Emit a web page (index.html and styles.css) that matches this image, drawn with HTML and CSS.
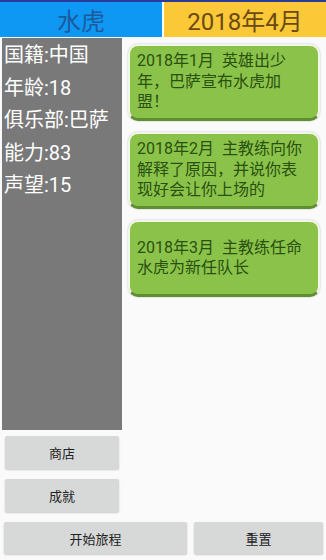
FILE: index.html
```html
<!DOCTYPE html>
<html lang="zh">
<head>
    <meta charset="UTF-8">
    <title>水虎</title>
    <link rel="stylesheet" href="styles.css">
</head>
<body>
    <div class="topbar">
        <div class="name">水虎</div>
        <div class="date">2018年4月</div>
    </div>
    <div class="main">
        <div class="side">
            <div class="stats">
                <p>国籍:中国</p>
                <p>年龄:18</p>
                <p>俱乐部:巴萨</p>
                <p>能力:83</p>
                <p>声望:15</p>
            </div>
            <button class="btn small">商店</button>
            <button class="btn small">成就</button>
        </div>
        <div class="news">
            <div class="card">2018年1月&nbsp;&nbsp;英雄出少年，巴萨宣布水虎加盟！</div>
            <div class="card">2018年2月&nbsp;&nbsp;主教练向你解释了原因，并说你表现好会让你上场的</div>
            <div class="card">2018年3月&nbsp;&nbsp;主教练任命水虎为新任队长</div>
        </div>
    </div>
    <div class="bottom">
        <button class="btn start">开始旅程</button>
        <button class="btn reset">重置</button>
    </div>
</body>
</html>
```

FILE: styles.css
```css
body {
    margin: 0;
    width: 326px;
    height: 560px;
    background: #fafafa;
    font-family: Roboto, "Noto Sans CJK SC", sans-serif;
    overflow: hidden;
}
.topbar {
    display: flex;
    height: 35px;
    border-top: 2px solid #2a3a9a;
    gap: 2px;
    background: #fff;
}
.name, .date {
    display: flex;
    align-items: center;
    justify-content: center;
    font-size: 24px;
}
.name {
    width: 162px;
    background: #0e98f4;
    color: #1d5a9c;
}
.date {
    flex: 1;
    background: #fbc838;
    color: #6a4a12;
}
.main {
    display: flex;
    padding: 1px 0 0 2px;
}
.side {
    width: 120px;
    display: flex;
    flex-direction: column;
}
.stats {
    height: 392px;
    background: #797979;
    color: #fff;
    font-size: 20px;
    padding: 0 0 0 2px;
}
.stats p {
    margin: 0;
    line-height: 32.5px;
}
.stats p:first-child {
    margin-top: 1px;
}
.btn {
    border: none;
    border-radius: 2px;
    background: #d7d8d8;
    color: #222;
    font-family: Roboto, "Noto Sans CJK SC", sans-serif;
    font-size: 13px;
    box-shadow: 0 1px 2px rgba(0, 0, 0, 0.2);
    padding: 0;
}
.small {
    margin: 6px 0 0 3px;
    width: 114px;
    height: 33px;
}
.small + .small {
    margin-top: 10px;
}
.news {
    flex: 1;
    padding: 6px 6px 0 6px;
}
.card {
    height: 72px;
    margin-bottom: 11px;
    background: #8bc34a;
    border: 2px solid #f2f7ea;
    border-bottom: 3px solid #5f8d31;
    border-radius: 10px;
    box-shadow: 0 0 2px rgba(0, 0, 0, 0.25);
    color: #2a5010;
    font-size: 16px;
    line-height: 20.5px;
    padding: 0 11px 0 7px;
    display: flex;
    align-items: center;
}
.bottom {
    display: flex;
    gap: 7px;
    padding: 10px 3px 0 4px;
}
.start {
    width: 183px;
    height: 32px;
}
.reset {
    flex: 1;
    height: 32px;
}
```
